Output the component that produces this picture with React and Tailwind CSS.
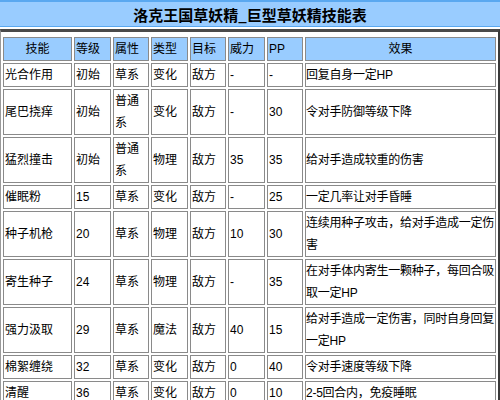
import React from "react";

const rows = [
  ["光合作用", "初始", "草系", "变化", "敌方", "-", "-", "回复自身一定HP"],
  ["尾巴挠痒", "初始", "普通系", "变化", "敌方", "-", "30", "令对手防御等级下降"],
  ["猛烈撞击", "初始", "普通系", "物理", "敌方", "35", "35", "给对手造成较重的伤害"],
  ["催眠粉", "15", "草系", "变化", "敌方", "-", "25", "一定几率让对手昏睡"],
  ["种子机枪", "20", "草系", "物理", "敌方", "10", "30", "连续用种子攻击，给对手造成一定伤害"],
  ["寄生种子", "24", "草系", "物理", "敌方", "-", "35", "在对手体内寄生一颗种子，每回合吸取一定HP"],
  ["强力汲取", "29", "草系", "魔法", "敌方", "40", "15", "给对手造成一定伤害，同时自身回复一定HP"],
  ["棉絮缠绕", "32", "草系", "变化", "敌方", "0", "40", "令对手速度等级下降"],
  ["清醒", "36", "草系", "变化", "敌方", "0", "10", "2-5回合内，免疫睡眠"],
];

const cell = "border border-[#8a8a8a] px-[1px] py-0 align-middle text-left font-normal";

export default function App() {
  return (
    <div
      className="w-[500px] h-[400px] overflow-hidden bg-white text-black"
      style={{ fontFamily: '"Liberation Sans", "Noto Sans CJK SC", sans-serif' }}
    >
      <div className="h-[27px] bg-[#99ccff] border-t-2 border-b border-[#5aa8f0] flex items-center justify-center">
        <span
          className="text-[15px] font-bold leading-none"
          style={{ fontFamily: '"Noto Sans CJK SC", sans-serif' }}
        >
          洛克王国草妖精_巨型草妖精技能表
        </span>
      </div>
      <div className="mt-[2px] border-t-[3px] border-t-[#4a4a4a] border-l border-l-[#9a9a9a] border-r-2 border-r-[#3a3a3a] pt-[3px]">
        <table className="w-full table-fixed border-separate border-spacing-[2px] text-[12px] leading-[22px]">
          <thead>
            <tr className="bg-[#99ccff]">
              <th className={`${cell} w-[69px] !text-center`}>技能</th>
              <th className={`${cell} w-[37px]`}>等级</th>
              <th className={`${cell} w-[36px]`}>属性</th>
              <th className={`${cell} w-[37px]`}>类型</th>
              <th className={`${cell} w-[36px]`}>目标</th>
              <th className={`${cell} w-[37px]`}>威力</th>
              <th className={`${cell} w-[36px]`}>PP</th>
              <th className={`${cell} w-[191px] !text-center`}>效果</th>
            </tr>
          </thead>
          <tbody>
            {rows.map((r, i) => (
              <tr key={i}>
                {r.map((c, j) => (
                  <td
                    key={j}
                    className={
                      j === 7
                        ? `${cell} break-all !px-0 tracking-[-0.25px]`
                        : `${cell} break-all`
                    }
                  >
                    {c}
                  </td>
                ))}
              </tr>
            ))}
          </tbody>
        </table>
      </div>
    </div>
  );
}
